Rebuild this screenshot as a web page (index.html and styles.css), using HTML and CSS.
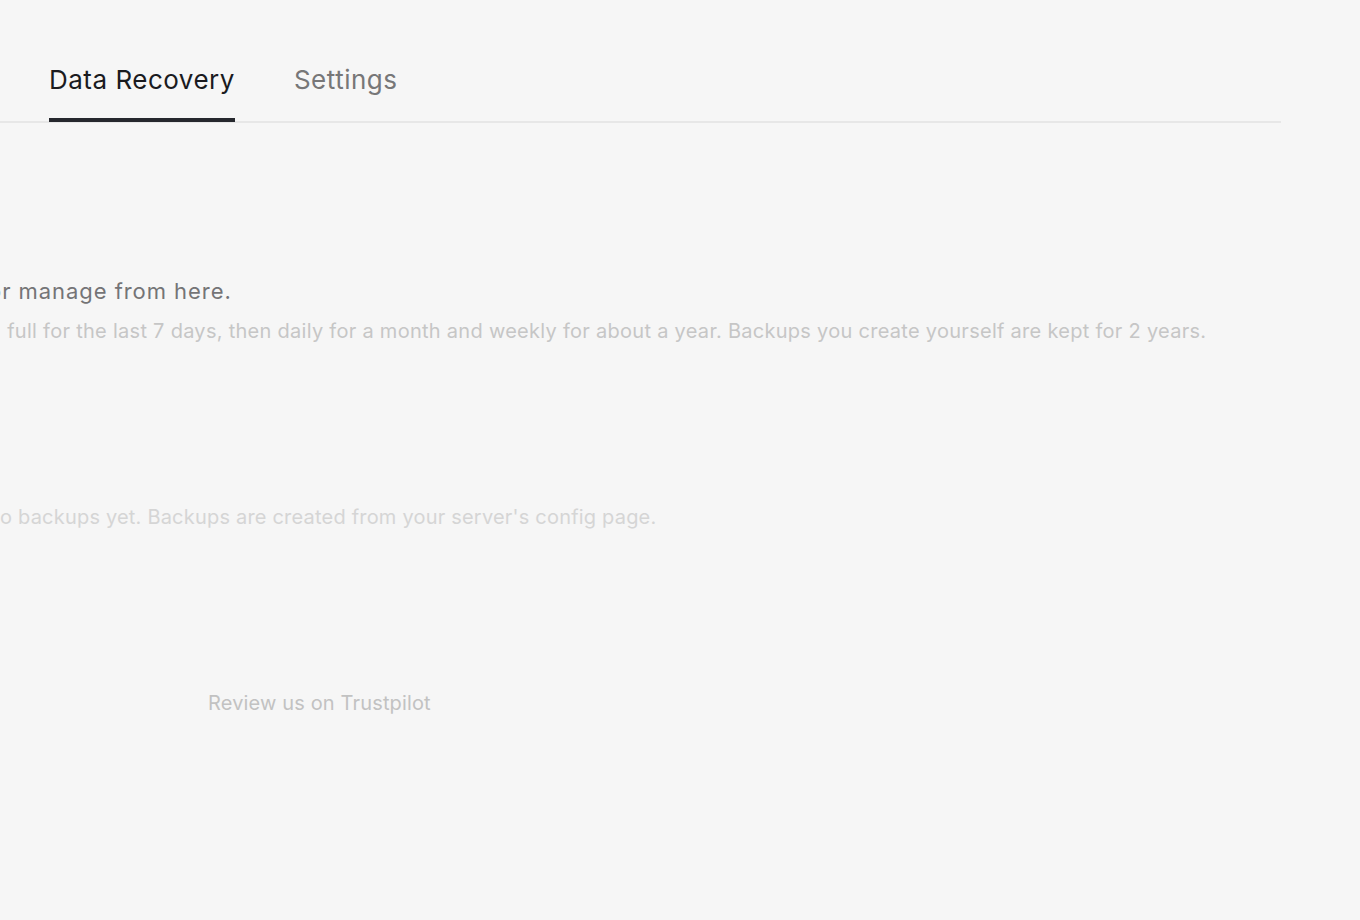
FILE: index.html
```html
<!DOCTYPE html>
<html lang="en">
<head>
<meta charset="utf-8">
<title>Data Recovery</title>
<link rel="stylesheet" href="styles.css">
</head>
<body>
<div class="page">
  <nav class="tabs">
    <a class="tab tab-active">Data Recovery</a>
    <a class="tab">Settings</a>
  </nav>
  <section class="content">
    <p class="lead">or manage from here.</p>
    <p class="note">in full for the last 7 days, then daily for a month and weekly for about a year. Backups you create yourself are kept for 2 years.</p>
    <p class="empty">no backups yet. Backups are created from your server's config page.</p>
  </section>
  <footer class="footer">
    <a class="review">Review us on Trustpilot</a>
  </footer>
</div>
</body>
</html>
```
FILE: styles.css
```css
html, body {
  margin: 0;
  padding: 0;
  background: #f6f6f6;
  overflow: hidden;
}
body {
  font-family: Inter, "Noto Sans", sans-serif;
  width: 1360px;
  height: 920px;
}
.page {
  display: flex;
  flex-direction: column;
}
.tabs {
  width: 1281px;
  display: flex;
  gap: 59px;
  padding: 0 0 0 49px;
  box-sizing: border-box;
  border-bottom: 2px solid #e7e7e7;
}
.tab {
  font-size: 26px;
  letter-spacing: 0.5px;
  color: #777778;
  padding: 62px 0 20px;
  line-height: 36px;
  margin-bottom: -1px;
  border-bottom: 4px solid transparent;
}
.tab-active {
  color: #1a1b1f;
  border-bottom-color: #26282e;
}
.content {
  padding-top: 153px;
}
.content p {
  margin: 0;
  white-space: nowrap;
}
.lead {
  font-size: 22px;
  letter-spacing: 0.95px;
  line-height: 30px;
  color: #747476;
  margin-left: -12px !important;
}
.note {
  font-size: 20px;
  letter-spacing: 0.28px;
  line-height: 26px;
  color: #c6c6c6;
  margin-top: 12px !important;
  margin-left: -16px !important;
}
.empty {
  font-size: 20px;
  letter-spacing: 0.2px;
  line-height: 26px;
  color: #d5d5d5;
  margin-top: 160px !important;
  margin-left: -12px !important;
}
.footer {
  padding: 160px 0 0 208px;
}
.review {
  font-size: 20px;
  letter-spacing: 0.15px;
  line-height: 26px;
  color: #c2c2c2;
}
```
